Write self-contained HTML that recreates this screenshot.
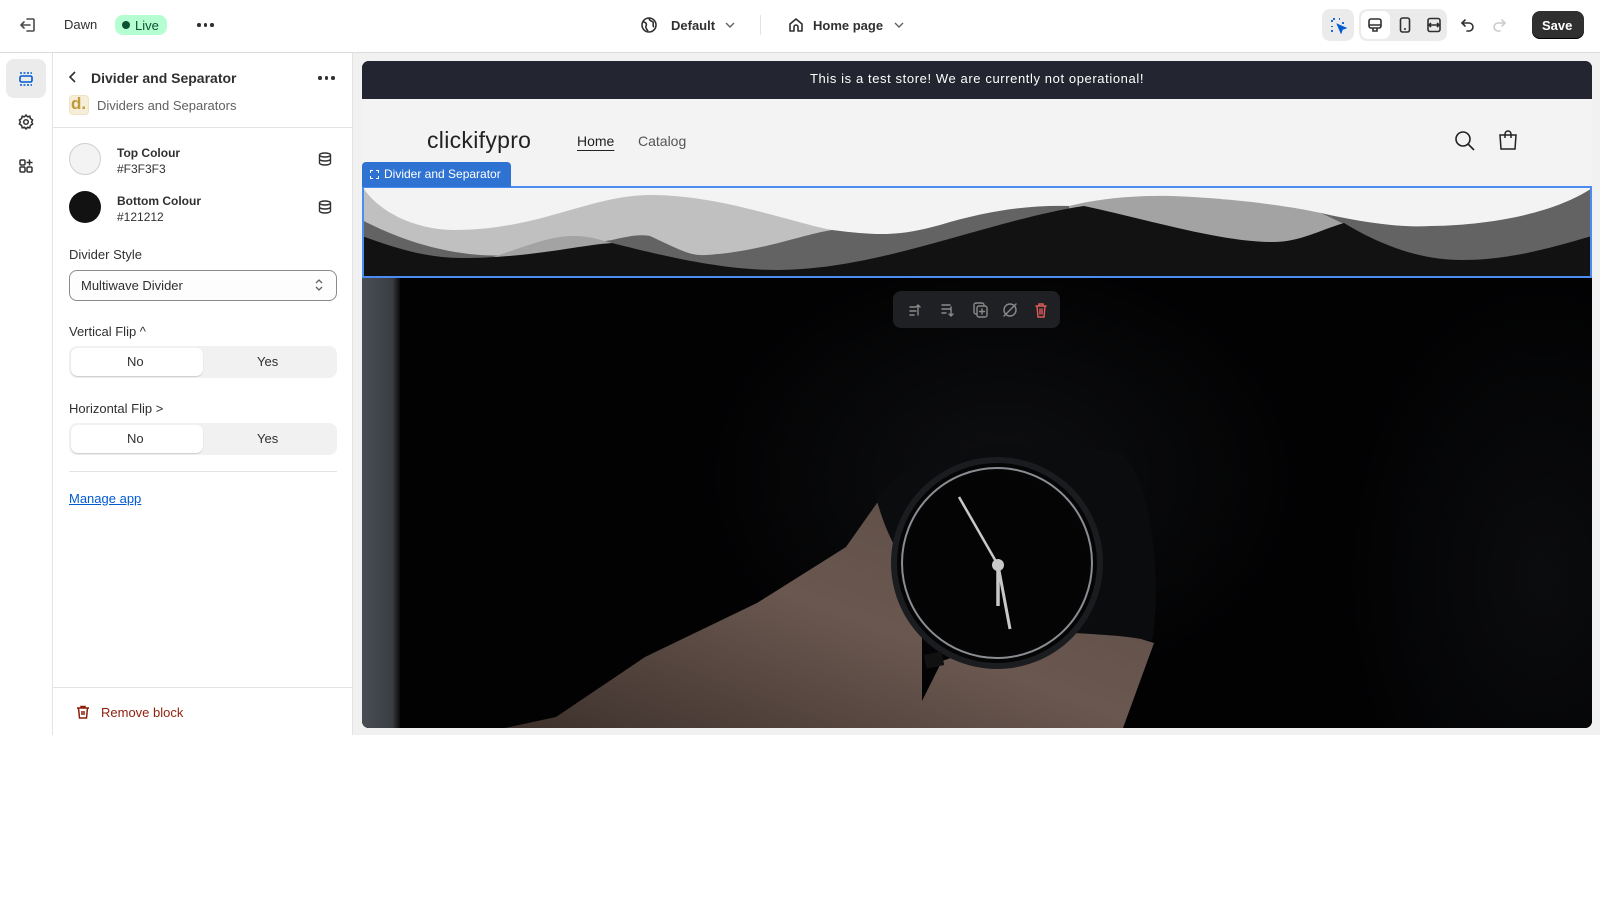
<!DOCTYPE html>
<html><head><meta charset="utf-8"><style>
*{box-sizing:border-box;margin:0;padding:0}
body{width:1600px;height:900px;background:#fff;font-family:"Liberation Sans",sans-serif;font-size:13px;color:#303030;position:relative;overflow:hidden}
.a{position:absolute}
.top{left:0;top:0;width:1600px;height:53px;background:#fff;border-bottom:1px solid #dcdcdc}
.rail{left:0;top:53px;width:53px;height:682px;background:#fff;border-right:1px solid #e3e3e3}
.panel{left:53px;top:53px;width:300px;height:682px;background:#fff;border-right:1px solid #e3e3e3}
.prev{left:353px;top:53px;width:1247px;height:682px;background:#f1f1f1}
.frame{left:362px;top:61px;width:1230px;height:667px;border-radius:7px;overflow:hidden;background:#000}
.t{white-space:nowrap}
.seg{position:absolute;left:69px;width:268px;height:32px;background:#f1f1f1;border-radius:8px}
.seg .on{position:absolute;left:2px;top:2px;width:132px;height:28px;background:#fff;border-radius:7px;box-shadow:0 1px 1px rgba(0,0,0,.15)}
.seg span{position:absolute;top:8px;font-size:13px;color:#303030}
.dots{position:absolute;display:flex;gap:3px}
.dots i{display:block;width:3.5px;height:3.5px;border-radius:50%;background:#303030}
</style></head><body>

<!-- top bar -->
<div class="a top"></div>
<svg class="a" style="left:18px;top:15px" width="20" height="20" viewBox="0 0 20 20" fill="none" stroke="#4a4a4a" stroke-width="1.6" stroke-linecap="round" stroke-linejoin="round"><path d="M9 4h6a1 1 0 0 1 1 1v10a1 1 0 0 1-1 1H9"/><path d="M12 10H3M6 7l-3 3 3 3"/></svg>
<div class="a t" style="left:64px;top:17px;font-size:13px;color:#303030">Dawn</div>
<div class="a" style="left:115px;top:15px;width:52px;height:20px;background:#b4fed2;border-radius:8px"></div>
<div class="a" style="left:122px;top:21px;width:8px;height:8px;border-radius:50%;background:#0c5132"></div>
<div class="a t" style="left:135px;top:18px;color:#0c5132">Live</div>
<div class="dots" style="left:197px;top:23px"><i></i><i></i><i></i></div>

<svg class="a" style="left:640px;top:16px" width="18" height="18" viewBox="0 0 18 18" fill="none" stroke="#303030" stroke-width="1.6"><circle cx="9" cy="9" r="7"/><path d="M3 6c3 0 4 2 3 4s1 3 2 5M9 2c0 3 3 3 4 4s-1 4 1 5"/></svg>
<div class="a t" style="left:671px;top:18px;font-weight:bold;color:#303030">Default</div>
<svg class="a" style="left:724px;top:20px" width="12" height="10"><path d="M2 3l4 4 4-4" fill="none" stroke="#616161" stroke-width="1.4"/></svg>
<div class="a" style="left:760px;top:15px;width:1px;height:20px;background:#e3e3e3"></div>
<svg class="a" style="left:787px;top:16px" width="18" height="18" viewBox="0 0 18 18" fill="none" stroke="#303030" stroke-width="1.6" stroke-linejoin="round"><path d="M3 8l6-5 6 5v7H11v-4a2 2 0 0 0-4 0v4H3z"/></svg>
<div class="a t" style="left:813px;top:18px;font-weight:bold;color:#303030">Home page</div>
<svg class="a" style="left:893px;top:20px" width="12" height="10"><path d="M2 3l4 4 4-4" fill="none" stroke="#616161" stroke-width="1.4"/></svg>

<div class="a" style="left:1322px;top:9px;width:32px;height:32px;background:#ebebeb;border-radius:8px"></div>
<svg class="a" style="left:1329px;top:16px" width="18" height="18" viewBox="0 0 18 18" fill="none" stroke="#005bd3" stroke-width="1.8"><path d="M3 6V3h3M10 3h1M3 10v1M3 14v1h2M14 6v2" stroke-dasharray="2 2"/><path d="M9 9l7 3-3 1-1 3z" fill="#005bd3"/></svg>
<div class="a" style="left:1359px;top:9px;width:88px;height:32px;background:#ebebeb;border-radius:8px"></div>
<div class="a" style="left:1361px;top:11px;width:29px;height:28px;background:#fff;border-radius:7px"></div>
<svg class="a" style="left:1366px;top:16px" width="18" height="18" viewBox="0 0 18 18" fill="none" stroke="#303030" stroke-width="1.6"><rect x="3" y="3" width="12" height="9" rx="2"/><path d="M3 9h12M7 12v3h4v-3"/></svg>
<svg class="a" style="left:1396px;top:16px" width="18" height="18" viewBox="0 0 18 18" fill="none" stroke="#303030" stroke-width="1.6"><rect x="4.5" y="2" width="9" height="14" rx="2"/><path d="M8 13h2"/></svg>
<svg class="a" style="left:1425px;top:16px" width="18" height="18" viewBox="0 0 18 18" fill="none" stroke="#303030" stroke-width="1.6"><rect x="3" y="2.5" width="12" height="13" rx="2"/><path d="M3 9h12M6 7l-2 2 2 2M12 7l2 2-2 2"/></svg>
<svg class="a" style="left:1459px;top:16px" width="18" height="18" viewBox="0 0 18 18" fill="none" stroke="#303030" stroke-width="1.6" stroke-linecap="round"><path d="M6 4L3 7l3 3"/><path d="M3 7h7a4 4 0 0 1 0 8H8"/></svg>
<svg class="a" style="left:1490px;top:16px" width="18" height="18" viewBox="0 0 18 18" fill="none" stroke="#cccccc" stroke-width="1.6" stroke-linecap="round"><path d="M12 4l3 3-3 3"/><path d="M15 7H8a4 4 0 0 0 0 8h2"/></svg>
<div class="a" style="left:1532px;top:11px;width:52px;height:28px;background:#303030;border-radius:8px;box-shadow:inset 0 -1px 0 #000"></div>
<div class="a t" style="left:1542px;top:18px;color:#fff;font-weight:bold">Save</div>

<!-- rail -->
<div class="a rail"></div>
<div class="a" style="left:6px;top:59px;width:40px;height:39px;background:#ebebeb;border-radius:8px"></div>
<svg class="a" style="left:17px;top:70px" width="18" height="18" viewBox="0 0 18 18" fill="none" stroke="#005bd3" stroke-width="1.6"><rect x="3" y="6" width="12" height="6" rx="1.5"/><path d="M3 3h12M3 15h12" stroke-dasharray="2 1.5"/></svg>
<svg class="a" style="left:17px;top:113px" width="18" height="18" viewBox="0 0 18 18" fill="none" stroke="#303030" stroke-width="1.5"><circle cx="9" cy="9" r="2.3"/><path d="M9 2l1.5 1.8 2.3-.6.6 2.3L15.6 7l-1 2 1 2-2.2 1.5-.6 2.3-2.3-.6L9 16l-1.5-1.8-2.3.6-.6-2.3L2.4 11l1-2-1-2 2.2-1.5.6-2.3 2.3.6z"/></svg>
<svg class="a" style="left:17px;top:157px" width="18" height="18" viewBox="0 0 18 18" fill="none" stroke="#303030" stroke-width="1.5"><rect x="3" y="3" width="5" height="5" rx="1.2"/><rect x="3" y="10" width="5" height="5" rx="1.2"/><rect x="10" y="10" width="5" height="5" rx="1.2"/><path d="M12.5 2.5v6M9.5 5.5h6"/></svg>

<!-- panel -->
<div class="a panel"></div>
<svg class="a" style="left:66px;top:70px" width="14" height="14"><path d="M9 2L4 7l5 5" fill="none" stroke="#303030" stroke-width="1.6"/></svg>
<div class="a t" style="left:91px;top:70px;font-size:14px;font-weight:bold;color:#303030">Divider and Separator</div>
<div class="dots" style="left:318px;top:76px"><i></i><i></i><i></i></div>
<div class="a" style="left:69px;top:95px;width:20px;height:20px;background:#f6eed8;border-radius:4px;border:1px solid #efe3c2"></div>
<div class="a t" style="left:71px;top:94px;font-size:17px;color:#c09a3b;font-weight:bold">d.</div>
<div class="a t" style="left:97px;top:98px;font-size:13px;color:#616161">Dividers and Separators</div>
<div class="a" style="left:53px;top:127px;width:300px;height:1px;background:#e3e3e3"></div>

<div class="a" style="left:69px;top:143px;width:32px;height:32px;border-radius:50%;background:#f3f3f3;border:1px solid #cfcfcf"></div>
<div class="a t" style="left:117px;top:146px;font-size:12px;font-weight:bold;color:#303030">Top Colour</div>
<div class="a t" style="left:117px;top:162px;font-size:12px;color:#303030">#F3F3F3</div>
<div class="a" style="left:69px;top:191px;width:32px;height:32px;border-radius:50%;background:#121212"></div>
<div class="a t" style="left:117px;top:194px;font-size:12px;font-weight:bold;color:#303030">Bottom Colour</div>
<div class="a t" style="left:117px;top:210px;font-size:12px;color:#303030">#121212</div>
<svg class="a" style="left:317px;top:151px" width="16" height="16" viewBox="0 0 16 16" fill="none" stroke="#303030" stroke-width="1.4"><ellipse cx="8" cy="4" rx="5.5" ry="2"/><path d="M2.5 4v8c0 1.1 2.5 2 5.5 2s5.5-.9 5.5-2V4M2.5 8c0 1.1 2.5 2 5.5 2s5.5-.9 5.5-2"/></svg>
<svg class="a" style="left:317px;top:199px" width="16" height="16" viewBox="0 0 16 16" fill="none" stroke="#303030" stroke-width="1.4"><ellipse cx="8" cy="4" rx="5.5" ry="2"/><path d="M2.5 4v8c0 1.1 2.5 2 5.5 2s5.5-.9 5.5-2V4M2.5 8c0 1.1 2.5 2 5.5 2s5.5-.9 5.5-2"/></svg>

<div class="a t" style="left:69px;top:247px;color:#303030">Divider Style</div>
<div class="a" style="left:69px;top:270px;width:268px;height:31px;border:1px solid #8a8a8a;border-radius:8px;background:#fdfdfd"></div>
<div class="a t" style="left:81px;top:278px;color:#303030">Multiwave Divider</div>
<svg class="a" style="left:313px;top:277px" width="12" height="16"><path d="M3 6l3-3 3 3M3 10l3 3 3-3" fill="none" stroke="#616161" stroke-width="1.3"/></svg>

<div class="a t" style="left:69px;top:324px;color:#303030">Vertical Flip ^</div>
<div class="seg" style="top:346px"><div class="on"></div><span style="left:58px">No</span><span style="left:188px">Yes</span></div>
<div class="a t" style="left:69px;top:401px;color:#303030">Horizontal Flip &gt;</div>
<div class="seg" style="top:423px"><div class="on"></div><span style="left:58px">No</span><span style="left:188px">Yes</span></div>
<div class="a" style="left:69px;top:471px;width:268px;height:1px;background:#e3e3e3"></div>
<div class="a t" style="left:69px;top:491px;color:#005bd3;text-decoration:underline">Manage app</div>

<div class="a" style="left:53px;top:687px;width:300px;height:1px;background:#e3e3e3"></div>
<svg class="a" style="left:75px;top:704px" width="16" height="16" viewBox="0 0 16 16" fill="none" stroke="#8e1f0b" stroke-width="1.5"><path d="M2 4h12M6 4V2.5h4V4M3.5 4l1 10h7l1-10M7 7v4M9 7v4"/></svg>
<div class="a t" style="left:101px;top:705px;color:#8e1f0b">Remove block</div>

<!-- preview -->
<div class="a prev"></div>
<div class="a frame">
  <div class="a" style="left:0;top:0;width:1230px;height:38px;background:#232630"></div>
  <div class="a t" style="left:0;top:10px;width:1230px;text-align:center;color:#fff;font-size:13px;letter-spacing:.6px">This is a test store! We are currently not operational!</div>
  <div class="a" style="left:0;top:38px;width:1230px;height:90px;background:#f3f3f3"></div>
  <div class="a t" style="left:65px;top:66px;font-size:23px;color:#222;letter-spacing:.3px">clickifypro</div>
  <div class="a t" style="left:215px;top:72px;font-size:14px;color:#222;text-decoration:underline;text-underline-offset:4px">Home</div>
  <div class="a t" style="left:276px;top:72px;font-size:14px;color:#555">Catalog</div>
  <svg class="a" style="left:1092px;top:69px" width="22" height="22" viewBox="0 0 22 22" fill="none" stroke="#222" stroke-width="1.6"><circle cx="9" cy="9" r="7"/><path d="M14 14l6 6"/></svg>
  <svg class="a" style="left:1135px;top:68px" width="22" height="22" viewBox="0 0 22 22" fill="none" stroke="#222" stroke-width="1.5"><path d="M3 6h16l-1 14H4z"/><path d="M8 9V5a3 3 0 0 1 6 0v4"/></svg>

  <!-- photo -->
  <div class="a" style="left:0;top:216px;width:1230px;height:451px;background:radial-gradient(ellipse 300px 220px at 640px 200px,#0e0f11,transparent),radial-gradient(ellipse 200px 300px at 1180px 300px,#0b0c0e,transparent),#020203"></div>
  <div class="a" style="left:0;top:216px;width:38px;height:451px;background:linear-gradient(90deg,#4a4e55,#3a3d43 80%,#0a0a0b)"></div>
  <svg class="a" style="left:0;top:0" width="1230" height="667">
    <defs><linearGradient id="sk" x1="0" y1="1" x2="1" y2="0"><stop offset="0" stop-color="#3d302b"/><stop offset=".5" stop-color="#6a5850"/><stop offset="1" stop-color="#5a4a43"/></linearGradient></defs>
    <path d="M143 667L194 656 283 596 395 542 484 486 515 442 560 430 560 640 580 600 700 560 760 572 792 582 761 667Z" fill="url(#sk)"/>
    <path d="M515 440C540 390 640 370 760 392 790 420 800 520 790 580 700 560 560 600 515 440Z" fill="#0b0c0e"/>
    <circle cx="635" cy="502" r="103" fill="#050506" stroke="#1b1c1f" stroke-width="6"/>
    <circle cx="635" cy="502" r="95" fill="none" stroke="#8a8d92" stroke-width="2"/>
    <circle cx="635" cy="502" r="90" fill="#040405"/>
    <rect x="563" y="592" width="18" height="14" fill="#111" transform="rotate(-12 572 599)"/>
    <line x1="636" y1="504" x2="597" y2="436" stroke="#c8c8c8" stroke-width="2.5"/>
    <line x1="636" y1="504" x2="636" y2="545" stroke="#c8c8c8" stroke-width="3.5"/>
    <line x1="636" y1="504" x2="648" y2="568" stroke="#c8c8c8" stroke-width="3"/>
    <circle cx="636" cy="504" r="6" fill="#c8c8c8"/>
  </svg>

  <!-- divider -->
  <svg class="a" style="left:0;top:125px" width="1230" height="92" viewBox="362 186 1230 92">
    <rect x="362" y="186" width="1230" height="92" fill="#f3f3f3"/>
    <path d="M362,186 C380,215 420,230 454,230 C540,230 590,195 651,195 C720,195 790,222 832,230 L832,280 L362,280Z" fill="#c0c0c0"/>
    <path d="M362,220 C400,240 440,252 480,255 C530,258 580,245 612,240 C630,236 640,234 650,236 C680,250 690,256 706,255 C760,252 800,235 832,230 C880,236 900,236 940,225 C990,210 1030,205 1069,206 L1069,280 L362,280Z" fill="#636363"/>
    <path d="M1321,213 C1360,222 1400,228 1431,226 C1500,225 1560,210 1592,188 L1592,280 L1321,280Z" fill="#636363"/>
    <path d="M1069,206 C1100,198 1140,195 1171,196 C1230,198 1290,206 1321,213 L1344,224 L1344,262 L1069,262Z" fill="#a3a3a3"/>
    <path d="M490,258 C530,245 550,236 573,236 C590,236 600,240 612,243 L600,262Z" fill="#a3a3a3"/>
    <path d="M362,236 C400,250 430,258 462,258 C530,258 580,245 612,243 C660,255 720,270 777,270 C880,270 990,220 1084,206 C1150,220 1220,242 1273,242 C1300,242 1320,230 1344,223 C1380,245 1420,260 1462,260 C1510,260 1550,248 1592,236 L1592,280 L362,280Z" fill="#121212"/>
  </svg>
  <div class="a" style="left:0;top:125px;width:1230px;height:92px;border:2px solid #4a8cf1"></div>
  <div class="a" style="left:0;top:101px;width:149px;height:25px;background:#2e72d2;border-radius:4px 4px 0 0"></div>
  <div class="a" style="left:8px;top:109px;width:9px;height:9px;border:1px dashed #fff"></div>
  <div class="a t" style="left:22px;top:106px;color:#fff;font-size:12px">Divider and Separator</div>

  <!-- toolbar -->
  <div class="a" style="left:531px;top:230px;width:167px;height:37px;background:#1f2023;border-radius:8px"></div>
  <svg class="a" style="left:546px;top:240px" width="140" height="18" viewBox="0 0 140 18" fill="none" stroke="#8a8a8a" stroke-width="1.4" stroke-linecap="round">
    <path d="M2 6h6M2 10h6M2 14h4M10 14V4M8 6l2-2 2 2"/>
    <path d="M34 4h8M34 8h8M34 12h4M43 6v9M41 13l2 2 2-2"/>
    <rect x="66" y="2" width="10" height="11" rx="2"/><rect x="69" y="5" width="10" height="11" rx="2" fill="#1f2023"/><path d="M74 8v5M71.5 10.5h5"/>
    <circle cx="102" cy="9" r="6"/><path d="M96 15l12-12"/>
    <path d="M128 5h10M131 5V3h4v2M129 5l1 11h6l1-11M132 8v5M134 8v5" stroke="#e05a5a"/>
  </svg>
</div>
</body></html>
